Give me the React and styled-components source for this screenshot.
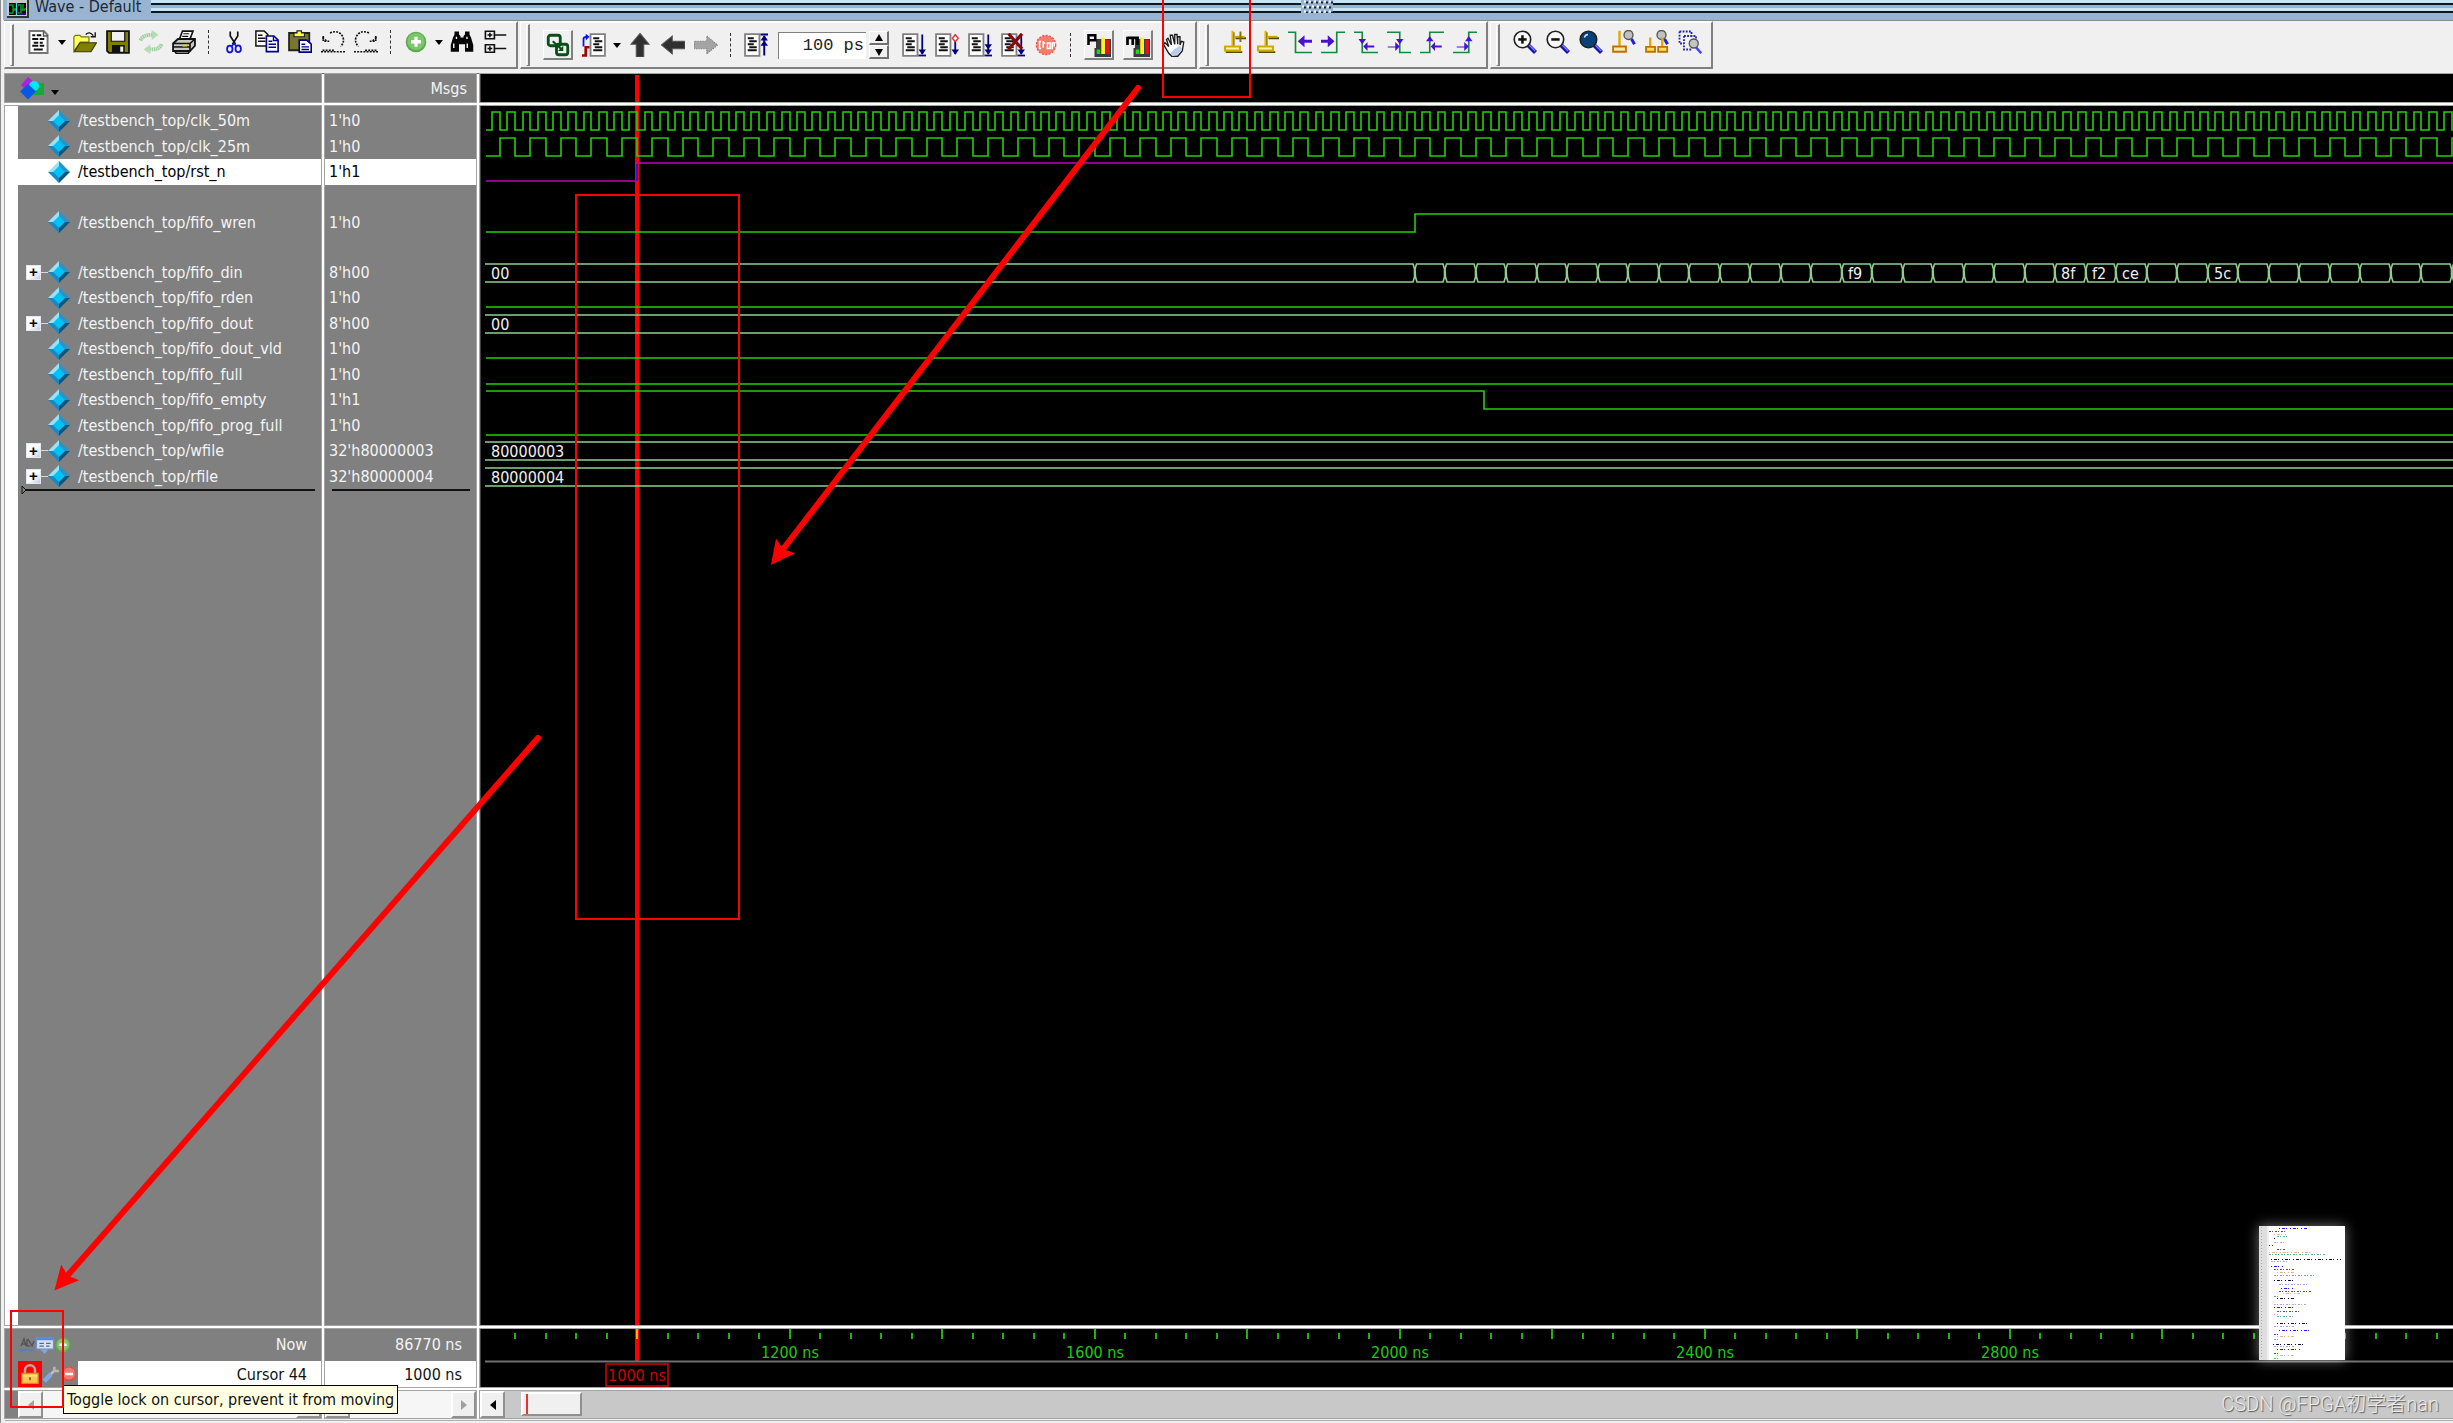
import React from 'react'
import styled, { createGlobalStyle, css } from 'styled-components'

const GlobalStyle = createGlobalStyle`
  * {
    box-sizing: border-box;
  }

  body {
    margin: 0;
    background: #f0f0f0;
    font-family: 'DejaVu Sans Condensed', 'Noto Sans', sans-serif;
    font-size: 16px;
    overflow: hidden;
  }

  ul {
    margin: 0;
    padding: 0;
    list-style: none;
  }
`

const GREEN = '#25cf0a'
const BUS = '#8fcf8f'
const MAGENTA = '#c000c0'

/* data */

const signals = [
  { name: 'clk_50m', value: "1'h0", clock: 20 },
  { name: 'clk_25m', value: "1'h0", clock: 40 },
  { name: 'rst_n', value: "1'h1", selected: true, from: 0, edge: 1000 },
  { name: 'fifo_wren', value: "1'h0", height: 75, from: 0, edge: 2020 },
  { name: 'fifo_din', value: "8'h00", bus: '00', cells: true },
  { name: 'fifo_rden', value: "1'h0", from: 0 },
  { name: 'fifo_dout', value: "8'h00", bus: '00' },
  { name: 'fifo_dout_vld', value: "1'h0", from: 0 },
  { name: 'fifo_full', value: "1'h0", from: 0 },
  { name: 'fifo_empty', value: "1'h1", from: 1, edge: 2111 },
  { name: 'fifo_prog_full', value: "1'h0", from: 0 },
  { name: 'wfile', value: "32'h80000003", bus: '80000003' },
  { name: 'rfile', value: "32'h80000004", bus: '80000004' }
]

const cellLabels = { 14: 'f9', 21: '8f', 22: 'f2', 23: 'ce', 26: '5c' }

const LIST_HEIGHT = 381
const ROW_HEIGHT = (LIST_HEIGHT - 75) / (signals.length - 1)

const rowTemplate = signals.map(({ height }) => (height ? `${height}px` : '1fr')).join(' ')

/* time axis */

const START = 840
const END = 3400
const timeToX = t => 156 + (t - 1000) * 0.7625

/* window frame */

const Window = styled.div`
  position: relative;
  display: flex;
  flex-direction: column;
  height: 100vh;
  padding-left: 4px;
  overflow: hidden;
  background: #f0f0f0;
  border-left: 1px solid #8c8c8c;
`

const TitleBar = styled.header`
  display: flex;
  height: 20px;
  margin: 0 -30px 0 -2px;
  padding-left: 4px;
  overflow: hidden;
  background: #99b4d1;
`

const Title = styled.h1`
  margin: 0 10px 0 6px;
  color: #1d2733;
  font-size: 16px;
  font-weight: 400;
  line-height: 13px;
  white-space: nowrap;
`

const Stripes = styled.div`
  flex: 1;
  height: 13px;
  background: linear-gradient(
    #c4e4f4 3px,
    #10181f 3px 5px,
    #99b4d1 5px 8px,
    #c4e4f4 8px 11px,
    #10181f 11px
  );
`

const Toolbars = styled.div`
  display: flex;
  gap: 2px;
  height: 54px;
  margin-left: -1px;
  padding-bottom: 4px;
  border-top: 1px solid #8c8c8c;
  border-bottom: 1px solid #6c6c6c;
`

const Group = styled.div`
  display: flex;
  align-items: center;
  height: 48px;
  padding: 0 5px ${({ raised }) => (raised ? 6 : 0)}px 0;
  border: 1px solid #fff;
  border-top-width: 2px;
  border-right: 2px solid #808080;
  border-bottom: 2px solid #808080;
`

const Handle = styled.span`
  align-self: flex-start;
  width: 4px;
  height: 42px;
  margin: 1px 8px 0 5px;
  border: 1px solid #fff;
  border-right: 2px solid #808080;
  border-bottom: 1px solid #808080;
`

const Separator = styled.span`
  width: 1px;
  height: 24px;
  margin: 0 8px;
  border-left: 1px dashed #303030;
`

const ToolButton = styled.button`
  display: flex;
  align-items: center;
  justify-content: center;
  width: 33px;
  height: 30px;
  padding: 0;
  background: none;
  border: 0;

  ${({ framed }) =>
    framed &&
    css`
      width: 30px;
      margin: 0 4px 0 5px;
      border: 1px solid #fff;
      border-right: 2px solid #808080;
      border-bottom: 2px solid #808080;
    `}
`

const CaretButton = styled(ToolButton)`
  width: 13px;
`

const StepInput = styled.input`
  width: 88px;
  height: 27px;
  margin: 0 3px 0 6px;
  padding: 0 2px;
  color: #222;
  background: #fff;
  border: 0;
  border-top: 1px solid #808080;
  border-left: 1px solid #808080;
  font-family: 'Liberation Mono', monospace;
  font-size: 17px;
  text-align: right;
`

const Spinner = styled.div`
  display: flex;
  flex-direction: column;
  width: 20px;
  margin-right: 8px;
`

const SpinButton = styled.button`
  display: flex;
  align-items: center;
  justify-content: center;
  height: 14px;
  padding: 0;
  background: #f0f0f0;
  border: 1px solid #fff;
  border-right: 2px solid #707070;
  border-bottom: 2px solid #707070;
`

/* panes */

const Panes = styled.main`
  flex: 1;
  display: grid;
  grid-template-columns: 316px 151px minmax(0, 1fr);
  grid-template-rows: 28px minmax(0, 1fr) 58px 27px;
  gap: 4px;
  min-height: 0;
  margin-bottom: 2px;
  background: #fff;
`

const Pane = styled.section`
  min-width: 0;
  overflow: hidden;
  background: #808080;
  box-shadow: 0 0 0 1px #a4a4a4;
`

const WavePane = styled(Pane)`
  background: #000;
  border-left: 1px solid #404040;

  svg {
    display: block;
    width: 100%;
    height: 100%;
  }
`

const NameHeader = styled(Pane)`
  display: flex;
  align-items: center;
  gap: 4px;
  padding-left: 15px;

  button {
    align-self: flex-end;
    height: 20px;
  }
`

const ValueHeader = styled(Pane)`
  padding-right: 9px;
  color: #f4f4f4;
  line-height: 30px;
  text-align: right;
`

const NamePane = styled(Pane)`
  padding-top: 2px;
  border-left: 13px solid #fff;
`

const ValuePane = styled(Pane)`
  padding-top: 2px;
`

const SignalList = styled.ul`
  display: grid;
  grid-template-rows: ${rowTemplate};
  height: ${LIST_HEIGHT}px;
`

const rowColors = css`
  display: flex;
  align-items: center;
  color: ${({ selected }) => (selected ? '#000' : '#f4f4f4')};
  background: ${({ selected }) => (selected ? '#fff' : 'none')};
  white-space: nowrap;
`

const SignalRow = styled.li`
  ${rowColors}
  padding-left: 8px;
`

const ValueRow = styled.li`
  ${rowColors}
  padding-left: 4px;
`

const ExpandSlot = styled.span`
  display: flex;
  align-items: center;
  width: 22px;
`

const ExpandButton = styled.button`
  width: 15px;
  height: 15px;
  padding: 0;
  color: #000;
  background: linear-gradient(135deg, #fff 50%, #c4cce0);
  border: 1px solid #e4e8f0;
  font-size: 15px;
  font-weight: 700;
  line-height: 12px;
`

const Branch = styled.span`
  flex: 1;
  height: 1px;
  background: #d8d8d8;
`

const SignalName = styled.span`
  padding-left: 8px;
`

const ListEnd = styled.div`
  display: flex;
  align-items: center;
  height: 2px;
  margin: 0 6px 0 3px;
  background: linear-gradient(#111, #111) 4px 0 no-repeat;

  svg {
    flex: none;
  }
`

/* cursor rows */

const Footer = styled(Pane)`
  display: grid;
  grid-template-rows: 32px 26px;
`

const FooterRow = styled.div`
  display: flex;
  align-items: center;
  min-width: 0;
  color: #f4f4f4;
`

const FooterText = styled.span`
  flex: 1;
  align-self: stretch;
  padding-right: 14px;
  color: ${({ active }) => (active ? '#111' : '#f4f4f4')};
  background: ${({ active }) => (active ? '#fff' : 'none')};
  line-height: ${({ active }) => (active ? 28 : 32)}px;
  text-align: right;
`

const CursorTools = styled.div`
  display: flex;
  align-items: center;
  align-self: stretch;
  width: 73px;
  padding-left: 13px;
`

const CursorTool = styled.button`
  display: flex;
  align-items: center;
  justify-content: center;
  align-self: stretch;
  width: ${({ locked }) => (locked ? 24 : 18)}px;
  padding: 0;
  background: ${({ locked }) => (locked ? '#f00' : 'none')};
  border: 0;
`

/* scrollbars */

const Scrollbar = styled.div`
  display: flex;
  justify-content: space-between;
  min-width: 0;
  background: ${({ wide }) => (wide ? '#c8c8c8' : '#f6f6f6')};
  border-left: ${({ inset }) => inset || 0}px solid #808080;
  box-shadow: 0 0 0 1px #a4a4a4;
`

const ScrollButton = styled.button`
  display: flex;
  align-items: center;
  justify-content: center;
  width: 25px;
  padding: 0;
  background: #f0f0f0;
  border: 2px solid #fff;
  border-right-color: #909090;
  border-bottom-color: #909090;
`

const Thumb = styled.div`
  width: 61px;
  margin: 1px auto 2px 16px;
  padding: 0 3px;
  background: #f0f0f0;
  border: 2px solid #fff;
  border-right-color: #909090;
  border-bottom-color: #909090;

  &::before {
    content: '';
    display: block;
    width: 2px;
    height: 100%;
    background: #f03030;
  }
`

const StatusStrip = styled.div`
  height: 3px;
  background: #f0f0f0;
  border-top: 1px solid #b0b0b0;
`

/* floating things */

const Tooltip = styled.div`
  position: absolute;
  left: 62px;
  bottom: 9px;
  height: 29px;
  padding: 0 3px;
  color: #111;
  background: #ffffe1;
  border: 1px solid #000;
  line-height: 28px;
  white-space: nowrap;
`

const Preview = styled.div`
  position: absolute;
  right: 108px;
  bottom: 63px;
  width: 86px;
  height: 134px;
  background: #fff;
  box-shadow: 0 0 12px rgba(255, 255, 255, 0.45);
`

const Watermark = styled.div`
  position: absolute;
  right: 14px;
  bottom: 6px;
  color: #ececec;
  font-family: Roboto, 'Noto Sans CJK SC', sans-serif;
  font-size: 20px;
  font-weight: 300;
  line-height: 26px;
  text-shadow: 1px 1px 1px #555;
`

const Annotations = styled.svg`
  position: absolute;
  top: 0;
  left: -1px;
  width: 100%;
  height: 100%;
  pointer-events: none;
`

/* icons, all on a 16 unit grid */

const Icon = ({ size = 24, children }) => (
  <svg width={size} height={size} viewBox="0 0 16 16" fill="none" aria-hidden="true">
    {children}
  </svg>
)

const Caret = () => (
  <svg width="8" height="5" viewBox="0 0 8 5" aria-hidden="true">
    <path d="M0 0h8L4 5z" fill="#000" />
  </svg>
)

const Triangle = ({ d, color = '#000' }) => (
  <svg width="8" height="10" viewBox="0 0 8 10" aria-hidden="true">
    <path d={d} fill={color} />
  </svg>
)

const Sheet = ({ x = 1 }) => (
  <g transform={`translate(${x} 0)`}>
    <path d="M.7.7h9.6v14.6H.7z" fill="#fff" stroke="#808080" strokeWidth="1.2" />
    <path
      d="M2.5 3.5h4M3.5 5.5h5M2.5 7.5h4M3.5 9.5h5M2.5 11.5h6"
      stroke="#111"
      strokeWidth="1.2"
    />
  </g>
)

const NewIcon = () => (
  <Icon>
    <path d="M1.6.7h9.6l2.5 2.5v12.1H1.6z" fill="#fff" stroke="#777" strokeWidth="1.3" />
    <path d="M11 1v3h3" stroke="#555" />
    <path
      d="M3.5 3.5h2m1 0h3M3.5 6h4m1 0h3M4.5 8.5h3m1 0h2M3.5 10.5h4m1 0h3M4.5 13h6"
      stroke="#111"
      strokeWidth="1.2"
    />
  </Icon>
)

const OpenIcon = () => (
  <Icon>
    <path d="M.6 6V4.6l1-1h3l1 1h5V8H5L.6 14z" fill="#ffff60" stroke="#777700" strokeWidth=".8" />
    <path d="M4.6 8.5h11L12 14.5H1z" fill="#808000" stroke="#3a3a00" strokeWidth=".8" />
    <path d="M8.5 3q2.5-2.5 5 .8M14.8 1.5v3h-3" stroke="#111" strokeWidth=".9" />
  </Icon>
)

const SaveIcon = () => (
  <Icon>
    <path d="M.7.7h14.6v14.6H2L.7 14z" fill="#808000" stroke="#111" strokeWidth="1.2" />
    <path d="M3.5 1h9v6.500h-9z" fill="#f0f0f0" stroke="#111" strokeWidth=".8" />
    <path d="M4 10h8.500v5H4z" fill="#111" />
    <path d="M9.500 11h2v3.500h-2z" fill="#f0f0f0" />
  </Icon>
)

const ReloadIcon = () => (
  <Icon>
    <g stroke="#9fcf9f" strokeWidth="2.600" strokeDasharray="1 .4">
      <path d="M1 7q1.500-4 8-3.800" />
      <path d="M15 9.500q-1.500 4-8 3.300" />
    </g>
    <path d="M8.500 0l4.500 3.200-4.500 3.500zM7.500 9.500L3 13l4.500 3z" fill="#b5dcb5" />
  </Icon>
)

const PrintIcon = () => (
  <Icon>
    <path d="M5 6L7 .7h7L12 6z" fill="#fff" stroke="#111" strokeWidth="1.100" />
    <path d="M7.500 2.500h4M6.800 4.200h4" stroke="#111" strokeWidth=".8" />
    <path d="M.7 9L4 6h11.300v4.500L12 14H.7z" fill="#c8c8c8" stroke="#111" strokeWidth="1.200" />
    <path d="M.7 9H12v5M12 9l3.300-3M2 14.500l.8 1h8L12 14" stroke="#111" strokeWidth="1.100" />
    <path d="M1 11.300h11" stroke="#111" />
    <path d="M7 9.800h3v1.200H7z" fill="#e8e000" />
  </Icon>
)

const CutIcon = () => (
  <Icon>
    <path d="M5.500 1v3L9 9.500M10.500 1v3L7 9.500" stroke="#111" strokeWidth="1.100" />
    <ellipse cx="5.200" cy="12.700" rx="1.800" ry="2.300" stroke="#1010ee" strokeWidth="1.200" />
    <ellipse cx="10.800" cy="12.500" rx="1.800" ry="2.300" stroke="#1010ee" strokeWidth="1.200" />
    <path d="M6.500 10.800L8 9l1.500 1.800" stroke="#1010ee" />
  </Icon>
)

const CopyIcon = () => (
  <Icon>
    <path d="M.6.6h5.500l2.500 2.500v7.500h-8z" fill="#fff" stroke="#111" />
    <path d="M2 3.500h3M2 5.500h5M2 7.500h5" stroke="#111" strokeWidth=".9" />
    <path d="M7.600 4h5l2.800 2.800v7.600H7.600z" fill="#fff" stroke="#000080" strokeWidth="1.100" />
    <path d="M12.300 4.200V7h3M9 7.500h2.500M9 9.500h5M9 11.500h5" stroke="#000080" strokeWidth=".9" />
  </Icon>
)

const PasteIcon = () => (
  <Icon>
    <path d="M.7 2h13.500v11.500H.7z" fill="#777733" stroke="#222" strokeWidth="1.200" />
    <path d="M4 4.500V2h2V.6h3V2h2v2.500z" fill="#ffff40" stroke="#222" strokeWidth=".8" />
    <path d="M7.500 6.700h5l3 2.800v5.200h-8z" fill="#fff" stroke="#000080" strokeWidth="1.100" />
    <path d="M9 9.500h2.500M9 11.200h5M9 13h5" stroke="#000080" strokeWidth=".9" />
  </Icon>
)

const TurnIcon = ({ flip }) => (
  <Icon>
    <g
      transform={flip ? 'matrix(-1 0 0 1 16 0)' : undefined}
      stroke="#111"
      strokeWidth="1.100"
      strokeDasharray="1.300 .8"
    >
      <path d="M6 2q6-2.500 8.500 2.500Q16 8 13 11" />
      <path d="M1.500 4v3.500h4" />
      <path d="M1 5l3 2.500" />
      <path d="M0 14.500h16" />
      <path d="M1 13.600h8" />
    </g>
  </Icon>
)

const AddIcon = ({ size }) => (
  <Icon size={size}>
    <circle cx="8" cy="8" r="7.500" fill="#5aac4c" />
    <circle cx="8" cy="7.600" r="6.300" fill="#7cc66c" />
    <path d="M8 4.200v7.200M4.400 7.800h7.200" stroke="#fff" strokeWidth="2.400" />
  </Icon>
)

const BinocularsIcon = () => (
  <Icon>
    <path
      d="M3 1h3v2l1 1v1h2V4l1-1V1h3v2l1 2 1.500 5v4.500H10V9.500H6v5H.5V10L2 5l1-2z"
      fill="#050505"
    />
    <path d="M2.500 9v3M11.500 9v3M4.300 4.500v1.500M11.300 4.500v1.500" stroke="#fff" strokeWidth=".9" />
  </Icon>
)

const TreeIcon = () => (
  <Icon>
    <path
      d="M1.600.8h6v5h-6zM1.600 9.800h6v5h-6zM8 3.300h7.500M8 12.300h7.500M4.600 1.800v3M3 3.300h3.200M4.600 10.800v3M3 12.300h3.200"
      stroke="#111"
      strokeWidth="1.100"
    />
  </Icon>
)

const LinkIcon = () => (
  <Icon>
    <g stroke="#084f18" strokeWidth="1.900">
      <rect x="1.500" y="1.500" width="8" height="7" rx="1.500" />
      <rect x="7" y="7.500" width="7.500" height="7" rx="1.500" />
    </g>
    <path d="M4.500 5.500l5.500 5" stroke="#084f18" strokeWidth="1.500" />
    <path d="M11.500 12V8.500L8 12z" fill="#084f18" />
  </Icon>
)

const SourceIcon = () => (
  <Icon>
    <Sheet x={5} />
    <path d="M1 9V4q0-1.500 3-1.500" stroke="#1010ee" strokeWidth="1.200" />
    <path d="M2.500.5L5 2.500 2.500 5z" fill="#1010ee" />
    <path d="M0 15h2.500V9.500H5" stroke="#a00000" strokeWidth="1.800" />
  </Icon>
)

const ArrowIcon = ({ turn, faded }) => (
  <Icon>
    <g transform={`rotate(${turn} 8 8)`}>
      <path
        d="M8 .3l6 7.200h-3.500V16h-5V7.500H2z"
        fill={faded ? '#a4a4a4' : '#303030'}
        stroke={faded ? '#777' : '#555'}
        strokeWidth=".7"
        strokeDasharray={faded ? '.8 .8' : undefined}
      />
    </g>
  </Icon>
)

const RestartIcon = () => (
  <Icon>
    <Sheet x={0} />
    <path d="M11 1h5M13.500 2v13" stroke="#000080" strokeWidth="1.300" />
    <path d="M13.500 1.500L16 5h-5zM13.500 5L16 8.500h-5z" fill="#000080" />
  </Icon>
)

const RunIcon = ({ kind }) => (
  <Icon>
    <Sheet x={0} />
    <path d="M13.500 1v13" stroke="#000080" strokeWidth="1.200" />
    {kind !== 'continue' && <path d="M11 15h5" stroke="#000080" strokeWidth="1.200" />}
    <path d="M11 11h5l-2.500 3.500z" fill="#000080" />
    {kind === 'all' && <path d="M11 7.500h5L13.500 11z" fill="#000080" />}
    {kind === 'continue' && (
      <path d="M13.500 1.300l2 2.200-2 2.200-2-2.200z" fill="#fff" stroke="#f03030" strokeWidth=".9" />
    )}
    {kind === 'break' && (
      <path d="M5 .5l9 10M14 .5L5 11" stroke="#8b0808" strokeWidth="2.100" />
    )}
  </Icon>
)

const StopIcon = () => (
  <Icon size={22}>
    <circle cx="8" cy="8" r="7" fill="#f47c6c" stroke="#e85848" strokeDasharray="1.500 1" />
    <path
      d="M4.500 5.500H3.300v5h1.200M6 5v5M5.500 6.500h2M9 6.500h2v4H9zM12.500 11V6.500h1.500V9"
      stroke="#fff"
      strokeWidth="1.100"
    />
  </Icon>
)

const ProfileIcon = ({ kind }) => (
  <Icon>
    <path d="M6 4h10v12H5v-6h1z" fill="#3b3b3b" />
    <path d="M6.500 11h2.300v3H6.500z" fill="#10e010" />
    <path d="M9.500 3h2.500v11H9.500z" fill="#fff020" />
    <path d="M12.800 4.500h2.500V14h-2.500z" fill="#f01010" />
    {kind === 'memory' ? (
      <path d="M1 8V2.500M1 3.300h3.500V8M4.500 3.300h3.200V8" stroke="#000" strokeWidth="1.800" />
    ) : (
      <path d="M1 8V1.500h4.500v3.300H1" stroke="#000" strokeWidth="1.700" />
    )}
  </Icon>
)

const HandIcon = () => (
  <Icon>
    <path
      d="M4.500 9L2 6.500 1 7.500l3.500 6 2 2h4l3-3.500 1-6-1.500-.5-1 2.500V2.500h-1.500v5L10 1H8.500v6.500L7 1.500H5.500l.8 6.500L4 3.500l-1 .8z"
      fill="#fff"
      stroke="#1a1a1a"
      strokeWidth=".9"
    />
    <path d="M8 11l4-2.500 1.500 2-3 4-3.500 1-1.500-2z" fill="#b9cdec" />
  </Icon>
)

const CursorIcon = ({ add }) => (
  <Icon>
    <path d="M2.500 14.800h11M7.700 1.500v9M9 5.500h7" stroke="#5a4a00" strokeWidth="1.200" />
    <path d="M7 .5v10" stroke="#e8b800" strokeWidth="1.400" />
    <path d="M2 11h10v2.700H2z" fill="#fff4b0" stroke="#d8a800" strokeWidth="1.400" />
    <path d="M8.500 4.500h6.500" stroke="#d0a800" strokeWidth="1.200" />
    {add && <path d="M12.300 1v7" stroke="#8a7000" strokeWidth="1.300" />}
  </Icon>
)

const EDGE = '#168a3c'
const EDGE_ARROW = '#4a10d0'

const PrevTransitionIcon = () => (
  <Icon>
    <path d="M0 1.500h5V15h11" stroke={EDGE} strokeWidth="1.100" />
    <path d="M9 7.500h7" stroke={EDGE_ARROW} strokeWidth="2" />
    <path d="M6.500 7.500l4.500-4v8z" fill={EDGE_ARROW} />
  </Icon>
)

const NextTransitionIcon = () => (
  <Icon>
    <path d="M16 1.500h-5.500V15H0" stroke={EDGE} strokeWidth="1.100" />
    <path d="M0 7.500h5" stroke={EDGE_ARROW} strokeWidth="2" />
    <path d="M9 7.500l-4.500-4v8z" fill={EDGE_ARROW} />
  </Icon>
)

const EdgeIcon = ({ rising, next }) => (
  <Icon>
    <path
      d={
        rising
          ? next
            ? 'M0 15h10.500V1.500H16'
            : 'M0 15h6.500V1.500H16'
          : next
            ? 'M0 1.500h8.500V15H16'
            : 'M0 1.500h5.500V15H16'
      }
      stroke={EDGE}
      strokeWidth="1.100"
    />
    <g transform={`translate(${next ? (rising ? 10.5 : 8.5) : rising ? 6.5 : 5.5} 0)`}>
      <path d={rising ? 'M-2.500 7.500h5L0 4z' : 'M-2.500 6h5L0 9.500z'} fill={EDGE_ARROW} />
      {next ? (
        <path d="M-8 11h5v-3l3 3-3 3v-2.300h-5z" fill={EDGE_ARROW} />
      ) : (
        <path d="M8 10.400H3.500V8L.7 11l2.800 3v-2.300H8z" fill={EDGE_ARROW} />
      )}
    </g>
  </Icon>
)

const ZoomIcon = ({ kind }) => (
  <Icon>
    <path d="M10 10l5 5" stroke="#1515b0" strokeWidth="2.800" />
    <path d="M10.800 10l4 4" stroke="#8080ff" strokeWidth=".8" />
    <circle
      cx="6.300"
      cy="6.300"
      r="5.500"
      fill={kind === 'full' ? '#084078' : '#f8f8f8'}
      stroke="#222"
      strokeWidth="1.100"
    />
    {kind === 'full' && <path d="M3.500 5q.8-2 2.500-2" stroke="#d0e0f0" />}
    {kind !== 'full' && <path d="M3.500 6.300h5.600" stroke="#111" strokeWidth="1.700" />}
    {kind === 'in' && <path d="M6.300 3.500v5.600" stroke="#111" strokeWidth="1.700" />}
  </Icon>
)

const ZoomCursorIcon = ({ double }) => (
  <Icon>
    <path d="M13 6l2 3.500" stroke="#2020e0" strokeWidth="2" />
    <circle cx="11" cy="3.300" r="3" fill="#c0c0c0" stroke="#555" strokeWidth=".9" />
    <g stroke="#c07000" strokeWidth="1.200">
      {double ? (
        <>
          <path d="M3.500 5v6M11.500 5v6" stroke="#e0a800" strokeWidth="1.600" />
          <path d="M.7 11.300h6v3.200h-6zM8.800 11.300h6v3.200h-6z" fill="#ffe060" />
        </>
      ) : (
        <>
          <path d="M5 .5v10" stroke="#e0a800" strokeWidth="1.600" />
          <path d="M.7 11h8.600v3.500H.7z" fill="#ffe9a0" />
        </>
      )}
    </g>
  </Icon>
)

const ZoomAreaIcon = () => (
  <Icon>
    <path
      d="M1 1h8v4M1 1v8h3M4 4h8v3M4 4v9h5"
      stroke="#2020a0"
      strokeWidth="1.200"
      strokeDasharray="1.200 .9"
    />
    <path d="M12 11.500l3.500 4" stroke="#4040ff" strokeWidth="1.700" />
    <circle cx="10.500" cy="9" r="3" fill="#c4c4c4" stroke="#555" strokeWidth=".9" />
  </Icon>
)

const WaveWindowIcon = () => (
  <svg width="22" height="18" viewBox="0 0 22 18" aria-hidden="true">
    <path d="M0 0h22v18H0z" fill="#c8c8c8" />
    <path d="M21 0v17H0" fill="none" stroke="#333" strokeWidth="2" />
    <path d="M2 3h17v12H2z" fill="#000" />
    <path
      d="M2 5h4v4h3M11 5h3v4h5M16 4v4M2 13h4v-3h3M11 13h3v-3h4"
      fill="none"
      stroke="#0a9a20"
      strokeWidth="1.500"
    />
    <path d="M9.500 3v12" stroke="#40d8f0" strokeWidth="1.500" />
    <path d="M12 14h7" stroke="#3010b0" strokeWidth="1.500" />
  </svg>
)

const ObjectsIcon = () => (
  <svg width="24" height="24" viewBox="0 0 24 24" aria-hidden="true">
    <path d="M12 7h12v12H12z" fill="#18a838" />
    <path d="M1 9l7-8 7 6-5 6-3-3-3 2z" fill="#b020e0" />
    <circle cx="14" cy="10" r="5" fill="#00e8ff" />
    <path d="M8 8l8 7.500L8 23.500 0 15.500z" fill="#0858e8" />
  </svg>
)

const SignalIcon = () => (
  <svg width="22" height="22" viewBox="0 0 22 22" aria-hidden="true">
    <path d="M11 0L0 11h11z" fill="#9be2f6" />
    <path d="M11 0l11 11H11z" fill="#2a94c8" />
    <path d="M0 11l11 11V11z" fill="#1688c4" />
    <path d="M22 11L11 22V11z" fill="#07547c" />
    <path d="M11 5l6 6-6 6-6-6z" fill="#00c2f8" />
  </svg>
)

const InsertMark = () => (
  <svg width="6" height="10" viewBox="0 0 6 10" aria-hidden="true">
    <path d="M1 1l4 4-4 4z" fill="#808080" stroke="#111" />
  </svg>
)

const LockIcon = () => (
  <Icon size={20}>
    <path d="M4 8V5a4 4 0 0 1 8 0v3" stroke="#b8a8a0" strokeWidth="2" />
    <path d="M1.500 7.500h13v8h-13z" fill="#f8c850" stroke="#d09028" />
    <path d="M2 9.500h12" stroke="#ffe69a" />
    <path d="M8 10.500v2.500" stroke="#a06010" strokeWidth="1.500" />
  </Icon>
)

const WrenchIcon = () => (
  <Icon size={18}>
    <path d="M2 14.500L8 8" stroke="#80a8e8" strokeWidth="4" />
    <path d="M8 8l3-3" stroke="#c0c0c0" strokeWidth="2.200" />
    <path d="M11 1.500v3.800h4" stroke="#b8b8b8" strokeWidth="2.200" />
  </Icon>
)

const RemoveIcon = () => (
  <Icon size={16}>
    <circle cx="8" cy="8" r="7.500" fill="#dd5048" />
    <circle cx="8" cy="7.500" r="6" fill="#f07870" />
    <path d="M4 8h8" stroke="#fff" strokeWidth="2.500" />
  </Icon>
)

const NamesIcon = () => (
  <Icon size={16}>
    <path d="M2 9l3-7 2 7M3.500 7h3M9 2l4 7 2-5M8 2v7h3" stroke="#555" strokeWidth="1.500" />
    <path d="M1 13h14M3 11l-2 2 2 2" stroke="#4c80c0" strokeWidth="1.500" />
  </Icon>
)

const FormIcon = () => (
  <Icon size={18}>
    <path d="M.5 1.500h15v10H.5z" fill="#d4e0f4" stroke="#7094d0" />
    <path d="M.5 2.500h15" stroke="#5888dc" strokeWidth="2.500" />
    <path d="M3 6.500h4M3 9h4M9 6.500h4M9 9h3" stroke="#667" strokeWidth="1.200" />
    <path d="M4 12h7l-3.500 4z" fill="#80a8e0" />
  </Icon>
)

/* wave drawing */

const clockPath = (period, high, low) => {
  let d = `M5 ${low}`
  for (let t = 800; t < END; t += period) {
    d += `H${Math.max(5, Math.round(timeToX(t + period / 2)))}V${high}`
    d += `H${Math.round(timeToX(t + period))}V${low}`
  }
  return d
}

const levelPath = ({ from, edge }, high, low) => {
  const first = from ? high : low
  const second = from ? low : high
  if (!edge) return `M5 ${first}H4000`
  return `M5 ${first}H${Math.round(timeToX(edge))}V${second}H4000`
}

const Bus = ({ label, cells, high, low }) => {
  if (!cells) {
    return (
      <>
        <path d={`M4 ${high}H4000M4 ${low}H4000`} />
        <BusText x="10" y={low - 3}>
          {label}
        </BusText>
      </>
    )
  }
  const shapes = []
  for (let i = 0, t = 2020; t < END; i += 1, t += 40) {
    const a = Math.round(timeToX(t))
    const b = Math.round(timeToX(t + 40))
    shapes.push(
      <React.Fragment key={t}>
        <path
          d={`M${a} ${high + 5}l1.500 -5H${b - 2}l1.500 5V${low - 5}l-1.500 5H${a + 2}l-1.500 -5z`}
        />
        {cellLabels[i] && (
          <BusText x={a + 6} y={low - 3}>
            {cellLabels[i]}
          </BusText>
        )}
      </React.Fragment>
    )
  }
  const x = Math.round(timeToX(2020))
  return (
    <>
      <path d={`M4 ${high}H${x - 2}l1.500 5V${low - 5}l-1.500 5H4`} />
      <BusText x="10" y={low - 3}>
        {label}
      </BusText>
      {shapes}
    </>
  )
}

const BusText = styled.text`
  fill: #f0f0f0;
  stroke: none;
  font-size: 16px;
`

const AxisText = styled.text`
  fill: ${({ active }) => (active ? '#d00000' : '#22c818')};
  font-size: 16px;
  text-anchor: middle;
`

const Waves = () => {
  let top = 2.5
  return (
    <svg>
      <rect x="154" y="0" width="4" height="100%" fill="#f00" />
      {signals.map(signal => {
        const height = signal.height || ROW_HEIGHT
        const high = Math.round(top + height / 2 - 9)
        const low = high + 18
        top += height
        const color = signal.selected ? MAGENTA : signal.bus ? BUS : GREEN
        return (
          <g key={signal.name} stroke={color} strokeWidth="1.6" fill="none">
            {signal.bus && (
              <Bus label={signal.bus} cells={signal.cells} high={high} low={low} />
            )}
            {signal.clock && <path d={clockPath(signal.clock, high, low)} />}
            {!signal.bus && !signal.clock && <path d={levelPath(signal, high, low)} />}
          </g>
        )
      })}
      <path d="M156 58v17" stroke="#4010d0" strokeWidth="2" />
    </svg>
  )
}

const TimeAxis = () => {
  const ticks = []
  for (let t = START; t < END; t += 40) {
    const major = t % 200 === 0
    const x = Math.round(timeToX(t))
    ticks.push(
      <g key={t}>
        <path
          d={`M${x} ${major ? 0 : 4}V10`}
          stroke={t === 1000 ? '#ffe000' : '#28e010'}
          strokeWidth="1.6"
        />
        {t % 400 === 0 && (
          <AxisText x={x} y="29">
            {t} ns
          </AxisText>
        )}
      </g>
    )
  }
  return (
    <svg>
      <rect x="154" y="0" width="4" height="32" fill="#f00" />
      {ticks}
      <path d="M4 32.500H4000" stroke="#707070" strokeWidth="2" />
      <rect x="125" y="35" width="62" height="22" fill="#000" stroke="#d00000" strokeWidth="1.6" />
      <AxisText x="156" y="52" active="true">
        1000 ns
      </AxisText>
    </svg>
  )
}

const previewColors = ['#2020f0', '#4a4ab0', '#f0b080', '#60b890', '#101030', '#b0a0f0']
const previewLines = [
  [2, 20, 28], [5, 10, 16], [8, 15, 13], [10, 18, 11], [12, 15, 3], [16, 15, 12],
  [19, 10, 4], [23, 18, 9], [26, 10, 44], [28, 10, 56], [33, 12, 70], [35, 12, 16],
  [40, 12, 14], [43, 15, 20], [46, 18, 17], [49, 15, 40], [54, 15, 20], [58, 20, 30],
  [62, 22, 14], [65, 20, 32], [67, 24, 17], [70, 15, 4], [72, 18, 18], [78, 15, 32],
  [81, 15, 20], [85, 18, 23], [88, 15, 4], [90, 18, 17], [97, 18, 32], [100, 15, 20],
  [104, 20, 33], [108, 15, 5], [110, 18, 17], [113, 15, 4], [118, 14, 33], [120, 15, 20],
  [123, 18, 24], [127, 15, 4], [129, 18, 17], [132, 15, 6]
]

const PreviewCode = () => (
  <svg width="86" height="134" viewBox="0 0 86 134" aria-hidden="true">
    <path d="M0 0h8v134H0z" fill="#dedede" />
    <path d="M8 0h2v134H8z" fill="#f0f0f0" />
    <path d="M2.500 1v132" stroke="#a8a8a8" strokeDasharray="1 2" />
    {previewLines.map(([y, x, w], i) => (
      <path
        key={y}
        d={`M${x} ${y + 0.5}h${w}`}
        stroke={previewColors[i % previewColors.length]}
        strokeDasharray={i % 2 ? '2 1 1 2' : '1 2 3 1 1 3'}
      />
    ))}
  </svg>
)

/* page parts */

const Tool = ({ label, framed, children }) => (
  <ToolButton type="button" aria-label={label} title={label} framed={framed ? 1 : undefined}>
    {children}
  </ToolButton>
)

const Menu = ({ label }) => (
  <CaretButton type="button" aria-label={label}>
    <Caret />
  </CaretButton>
)

const StandardTools = () => (
  <Group raised={1}>
    <Handle />
    <Tool label="New"><NewIcon /></Tool>
    <Menu label="New options" />
    <Tool label="Open"><OpenIcon /></Tool>
    <Tool label="Save"><SaveIcon /></Tool>
    <Tool label="Reload"><ReloadIcon /></Tool>
    <Tool label="Print"><PrintIcon /></Tool>
    <Separator />
    <Tool label="Cut"><CutIcon /></Tool>
    <Tool label="Copy"><CopyIcon /></Tool>
    <Tool label="Paste"><PasteIcon /></Tool>
    <Tool label="Undo"><TurnIcon /></Tool>
    <Tool label="Redo"><TurnIcon flip /></Tool>
    <Separator />
    <Tool label="Add"><AddIcon size={22} /></Tool>
    <Menu label="Add options" />
    <Tool label="Find"><BinocularsIcon /></Tool>
    <Tool label="Expand"><TreeIcon /></Tool>
  </Group>
)

const SimulateTools = () => (
  <Group>
    <Handle />
    <Tool label="Link" framed><LinkIcon /></Tool>
    <Tool label="Event source"><SourceIcon /></Tool>
    <Menu label="Event source options" />
    <Tool label="Up"><ArrowIcon turn={0} /></Tool>
    <Tool label="Back"><ArrowIcon turn={-90} /></Tool>
    <Tool label="Forward"><ArrowIcon turn={90} faded /></Tool>
    <Separator />
    <Tool label="Restart"><RestartIcon /></Tool>
    <StepInput aria-label="Run length" defaultValue="100 ps" />
    <Spinner>
      <SpinButton type="button" aria-label="Longer">
        <Triangle d="M4 1l4 7H0z" />
      </SpinButton>
      <SpinButton type="button" aria-label="Shorter">
        <Triangle d="M4 9l4-7H0z" />
      </SpinButton>
    </Spinner>
    <Tool label="Run"><RunIcon kind="run" /></Tool>
    <Tool label="Continue run"><RunIcon kind="continue" /></Tool>
    <Tool label="Run all"><RunIcon kind="all" /></Tool>
    <Tool label="Break"><RunIcon kind="break" /></Tool>
    <Tool label="Stop"><StopIcon /></Tool>
    <Separator />
    <Tool label="Performance profiling" framed><ProfileIcon /></Tool>
    <Tool label="Memory profiling" framed><ProfileIcon kind="memory" /></Tool>
    <Tool label="Pan"><HandIcon /></Tool>
  </Group>
)

const CursorToolbar = () => (
  <Group raised={1}>
    <Handle />
    <Tool label="Insert cursor"><CursorIcon add /></Tool>
    <Tool label="Delete cursor"><CursorIcon /></Tool>
    <Tool label="Previous transition"><PrevTransitionIcon /></Tool>
    <Tool label="Next transition"><NextTransitionIcon /></Tool>
    <Tool label="Previous falling edge"><EdgeIcon /></Tool>
    <Tool label="Next falling edge"><EdgeIcon next /></Tool>
    <Tool label="Previous rising edge"><EdgeIcon rising /></Tool>
    <Tool label="Next rising edge"><EdgeIcon rising next /></Tool>
  </Group>
)

const ZoomTools = () => (
  <Group raised={1}>
    <Handle />
    <Tool label="Zoom in"><ZoomIcon kind="in" /></Tool>
    <Tool label="Zoom out"><ZoomIcon kind="out" /></Tool>
    <Tool label="Zoom full"><ZoomIcon kind="full" /></Tool>
    <Tool label="Zoom on cursor"><ZoomCursorIcon /></Tool>
    <Tool label="Zoom between cursors"><ZoomCursorIcon double /></Tool>
    <Tool label="Zoom area"><ZoomAreaIcon /></Tool>
  </Group>
)

const Signal = ({ name, bus, selected }) => (
  <SignalRow selected={selected ? 1 : 0}>
    <ExpandSlot>
      {bus && (
        <>
          <ExpandButton type="button" aria-label={`Expand ${name}`}>
            +
          </ExpandButton>
          <Branch />
        </>
      )}
    </ExpandSlot>
    <SignalIcon />
    <SignalName>/testbench_top/{name}</SignalName>
  </SignalRow>
)

const LEFT = 'M7 0v10L1 5z'
const RIGHT = 'M1 0v10l6-5z'

const App = () => (
  <Window>
    <GlobalStyle />
    <TitleBar>
      <WaveWindowIcon />
      <Title>Wave - Default</Title>
      <Stripes />
      <svg width="32" height="13" viewBox="0 0 32 13" aria-hidden="true">
        <g strokeWidth="2" strokeDasharray="2 3">
          <path d="M3 1.500h29M1 6.500h29M3 11.500h29" stroke="#fff" />
          <path d="M5 2.500h27M3 7.500h27M5 12.500h27" stroke="#1a222c" />
        </g>
      </svg>
      <Stripes />
    </TitleBar>
    <Toolbars>
      <StandardTools />
      <SimulateTools />
      <CursorToolbar />
      <ZoomTools />
    </Toolbars>

    <Panes>
      <NameHeader>
        <ObjectsIcon />
        <Menu label="Column options" />
      </NameHeader>
      <ValueHeader>Msgs</ValueHeader>
      <WavePane>
        <svg>
          <rect x="154" y="1" width="4" height="100%" fill="#f00" />
        </svg>
      </WavePane>

      <NamePane>
        <SignalList>
          {signals.map(signal => (
            <Signal key={signal.name} {...signal} />
          ))}
        </SignalList>
        <ListEnd>
          <InsertMark />
        </ListEnd>
      </NamePane>
      <ValuePane>
        <SignalList>
          {signals.map(({ name, value, selected }) => (
            <ValueRow key={name} selected={selected ? 1 : 0}>
              {value}
            </ValueRow>
          ))}
        </SignalList>
        <ListEnd />
      </ValuePane>
      <WavePane>
        <Waves />
      </WavePane>

      <Footer>
        <FooterRow>
          <CursorTools>
            <CursorTool type="button" aria-label="Toggle names"><NamesIcon /></CursorTool>
            <CursorTool type="button" aria-label="Edit grid"><FormIcon /></CursorTool>
            <CursorTool type="button" aria-label="Insert cursor"><AddIcon size={16} /></CursorTool>
          </CursorTools>
          <FooterText>Now</FooterText>
        </FooterRow>
        <FooterRow>
          <CursorTools>
            <CursorTool type="button" aria-label="Toggle lock" locked={1}><LockIcon /></CursorTool>
            <CursorTool type="button" aria-label="Edit cursor"><WrenchIcon /></CursorTool>
            <CursorTool type="button" aria-label="Remove cursor"><RemoveIcon /></CursorTool>
          </CursorTools>
          <FooterText active={1}>Cursor 44</FooterText>
        </FooterRow>
      </Footer>
      <Footer>
        <FooterText>86770 ns</FooterText>
        <FooterText active={1}>1000 ns</FooterText>
      </Footer>
      <WavePane>
        <TimeAxis />
      </WavePane>

      <Scrollbar inset={13}>
        <ScrollButton type="button" aria-label="Scroll names left">
          <Triangle d={LEFT} color="#a0a0a0" />
        </ScrollButton>
        <ScrollButton type="button" aria-label="Scroll names right">
          <Triangle d={RIGHT} color="#a0a0a0" />
        </ScrollButton>
      </Scrollbar>
      <Scrollbar>
        <ScrollButton type="button" aria-label="Scroll values left">
          <Triangle d={LEFT} color="#a0a0a0" />
        </ScrollButton>
        <ScrollButton type="button" aria-label="Scroll values right">
          <Triangle d={RIGHT} color="#a0a0a0" />
        </ScrollButton>
      </Scrollbar>
      <Scrollbar wide={1}>
        <ScrollButton type="button" aria-label="Scroll waves left">
          <Triangle d={LEFT} />
        </ScrollButton>
        <Thumb />
      </Scrollbar>
    </Panes>
    <StatusStrip />

    <Preview>
      <PreviewCode />
    </Preview>
    <Tooltip role="tooltip">Toggle lock on cursor, prevent it from moving</Tooltip>
    <Watermark>CSDN @FPGA初学者nan</Watermark>

    <Annotations aria-hidden="true">
      <defs>
        <marker
          id="head"
          markerUnits="userSpaceOnUse"
          markerWidth="30"
          markerHeight="30"
          viewBox="0 -15 30 30"
          refX="14"
          orient="auto"
        >
          <path d="M0-12L24 0 0 12l4-12z" fill="#f00" />
        </marker>
      </defs>
      <g stroke="#f00" fill="none" strokeWidth="2">
        <rect x="1163" y="-5" width="87" height="102" />
        <rect x="576" y="195" width="163" height="724" />
        <rect x="11" y="1311" width="52" height="96" />
      </g>
      <g stroke="#f00" strokeWidth="6" strokeLinecap="round">
        <path d="M1138 88L777 557" markerEnd="url(#head)" />
        <path d="M538 738L61 1283" markerEnd="url(#head)" />
      </g>
    </Annotations>
  </Window>
)

export default App
